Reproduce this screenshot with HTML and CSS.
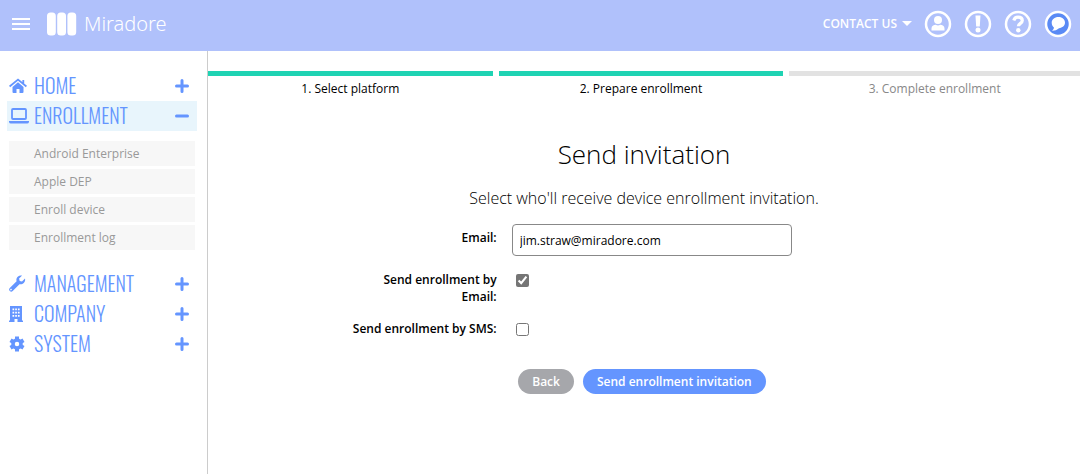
FILE: index.html
```html
<!DOCTYPE html>
<html lang="en">
<head>
    <meta charset="UTF-8">
    <meta name="viewport" content="width=device-width, initial-scale=1.0">
    <title>Miradore</title>
    <link rel="stylesheet" href="styles.css">
</head>
<body>

    <!-- Top bar -->
    <header class="topbar">
        <button class="menu-toggle" type="button" aria-label="Menu">
            <svg width="18" height="12" viewBox="0 0 18 12"><path d="M0 1h18M0 6h18M0 11h18" stroke="#fff" stroke-width="2"/></svg>
        </button>
        <a class="logo" href="#">
            <svg width="30" height="24" viewBox="0 0 30 24" fill="#fff">
                <rect x="0" y="0.500" width="8.800" height="23" rx="3.500"/>
                <rect x="10.200" y="0.500" width="8.800" height="23" rx="3.500"/>
                <rect x="20.400" y="0.500" width="8.800" height="23" rx="3.500"/>
            </svg>
            <span class="logo-text">Miradore</span>
        </a>
        <nav class="tools">
            <a class="contact" href="#">CONTACT US <span class="caret"></span></a>
            <a class="tool" href="#" aria-label="Account">
                <svg width="28" height="28" viewBox="0 0 28 28"><circle cx="14" cy="14" r="12" fill="none" stroke="#fff" stroke-width="2.500"/><circle cx="14" cy="10" r="4" fill="#fff"/><path d="M7.500 20.500v-2c0-2.500 2-3.700 4.300-3.700 1.400.9 3 .9 4.400 0 2.300 0 4.300 1.200 4.300 3.700v2z" fill="#fff"/></svg>
            </a>
            <a class="tool" href="#" aria-label="Notices">
                <svg width="28" height="28" viewBox="0 0 28 28"><circle cx="14" cy="14" r="12" fill="none" stroke="#fff" stroke-width="2.500"/><path d="M11.500 5.500h5l-.7 11h-3.600z" fill="#fff"/><circle cx="14" cy="20" r="2.500" fill="#fff"/></svg>
            </a>
            <a class="tool" href="#" aria-label="Help">
                <svg width="28" height="28" viewBox="0 0 28 28"><circle cx="14" cy="14" r="12" fill="none" stroke="#fff" stroke-width="2.500"/><path d="M9.800 10.500c.6-2.200 2-3.300 4.200-3.300 2.600 0 4.300 1.300 4.300 3.300 0 2.900-3.900 2.800-3.900 5.800" fill="none" stroke="#fff" stroke-width="3.200"/><circle cx="14.300" cy="20.300" r="2.200" fill="#fff"/></svg>
            </a>
            <a class="tool" href="#" aria-label="Chat">
                <svg width="28" height="28" viewBox="0 0 28 28"><circle cx="14" cy="14" r="12" fill="#5a8af5" stroke="#fff" stroke-width="2.500"/><path d="M14.500 7c4 0 6.500 2.500 6.500 5.600 0 3.200-2.700 5.400-6 5.600-2 1.800-4.500 2.600-7 2.500 1.200-.7 1.900-1.900 1.900-3.200-1.300-1-2.200-2.700-2.200-4.700C7.700 9.500 10.500 7 14.500 7z" fill="#fff"/></svg>
            </a>
        </nav>
    </header>

    <div class="page">
        <!-- Side menu -->
        <nav class="sidebar">
            <a class="menu-item" href="#">
                <svg class="menu-icon" viewBox="0 0 20 18"><path d="M9 5.300l5.500 4.700V15a1 1 0 0 1-1 1h-3v-4H7.500v4h-3a1 1 0 0 1-1-1v-5z" fill="#6495ff"/><path d="M.6 9.500L9 2.600l8.400 6.900M14.300 3v4" fill="none" stroke="#6495ff" stroke-width="1.800"/></svg>
                <span class="menu-label">HOME</span>
                <svg class="menu-sign" viewBox="0 0 14 14"><path d="M1.500 7h11M7 1.500v11"/></svg>
            </a>
            <a class="menu-item active" href="#">
                <svg class="menu-icon" viewBox="0 0 20 18"><rect x="3" y="2" width="14" height="10" rx="1" fill="none" stroke="#6495ff" stroke-width="1.800"/><path d="M0 14h20v1a2 2 0 0 1-2 1.500H2A2 2 0 0 1 0 15z" fill="#6495ff"/></svg>
                <span class="menu-label">ENROLLMENT</span>
                <svg class="menu-sign" viewBox="0 0 14 14"><path d="M1.500 7h11"/></svg>
            </a>
            <div class="submenu">
                <a href="#">Android Enterprise</a>
                <a href="#">Apple DEP</a>
                <a href="#">Enroll device</a>
                <a href="#">Enrollment log</a>
            </div>
            <a class="menu-item" href="#">
                <svg class="menu-icon" viewBox="0 0 20 18"><path d="M16 3.500l-3 3-2.300-.6-.6-2.300 3-3C10.500-.1 8 1.400 7.500 3.800c-.2 1-.1 1.700.1 2.500L.8 13.100a2 2 0 0 0 2.900 2.900l6.800-6.800c3.200.8 6.400-2 5.500-5.700zM2.300 15.300a.8.800 0 1 1 0-1.500.8.800 0 0 1 0 1.500z" fill="#6495ff"/></svg>
                <span class="menu-label">MANAGEMENT</span>
                <svg class="menu-sign" viewBox="0 0 14 14"><path d="M1.500 7h11M7 1.500v11"/></svg>
            </a>
            <a class="menu-item" href="#">
                <svg class="menu-icon" viewBox="0 0 20 18"><path d="M1 1h12v14.500h1V17H8.500v-3h-3v3H0v-1.500h1z" fill="#6495ff"/><path d="M3.500 3.500h1.700v1.700H3.500zm2.700 0h1.700v1.700H6.200zm2.700 0h1.700v1.700H8.900zM3.500 6.800h1.700v1.700H3.500zm2.700 0h1.700v1.700H6.200zm2.700 0h1.700v1.700H8.900zM3.500 10.100h1.700v1.700H3.500zm2.700 0h1.700v1.700H6.200zm2.700 0h1.700v1.700H8.900z" fill="#fff"/></svg>
                <span class="menu-label">COMPANY</span>
                <svg class="menu-sign" viewBox="0 0 14 14"><path d="M1.500 7h11M7 1.500v11"/></svg>
            </a>
            <a class="menu-item" href="#">
                <svg class="menu-icon" viewBox="0 0 20 18"><circle cx="8" cy="9" r="4" fill="none" stroke="#6495ff" stroke-width="3.500"/><path d="M8 1.500v3M8 13.500v3M1.500 5.200l3 1.800M11.500 11l3 1.800M1.500 12.800l3-1.800M11.500 7l3-1.800" stroke="#6495ff" stroke-width="4"/></svg>
                <span class="menu-label">SYSTEM</span>
                <svg class="menu-sign" viewBox="0 0 14 14"><path d="M1.500 7h11M7 1.500v11"/></svg>
            </a>
        </nav>

        <!-- Enrollment wizard -->
        <main class="content">
            <ol class="steps">
                <li class="step done">1. Select platform</li>
                <li class="step done">2. Prepare enrollment</li>
                <li class="step">3. Complete enrollment</li>
            </ol>

            <h1>Send invitation</h1>
            <p class="intro">Select who'll receive device enrollment invitation.</p>

            <form class="form">
                <div class="row">
                    <label for="email">Email:</label>
                    <div class="field"><input type="text" id="email" value="jim.straw@miradore.com"></div>
                </div>
                <div class="row">
                    <label for="by-email">Send enrollment by Email:</label>
                    <div class="field"><input type="checkbox" id="by-email" checked></div>
                </div>
                <div class="row">
                    <label for="by-sms">Send enrollment by SMS:</label>
                    <div class="field"><input type="checkbox" id="by-sms"></div>
                </div>
                <div class="buttons">
                    <button class="btn btn-back" type="button">Back</button>
                    <button class="btn btn-send" type="button">Send enrollment invitation</button>
                </div>
            </form>
        </main>
    </div>

</body>
</html>
```
FILE: styles.css
```css
* {
    box-sizing: border-box;
}

body {
    margin: 0;
    min-height: 100vh;
    display: flex;
    flex-direction: column;
    background-color: #fff;
    color: #000;
    font-family: "Open Sans", sans-serif;
    font-size: 12px;
    line-height: 17px;
}

a {
    color: inherit;
    text-decoration: none;
}

svg {
    display: block;
}

/* Top bar */
.topbar {
    display: flex;
    align-items: center;
    height: 51px;
    padding: 0 8px 4px 12px;
    background-color: #b0c1fb;
    color: #fff;
}

.menu-toggle {
    padding: 0;
    border: none;
    background: none;
    cursor: pointer;
}

.logo {
    display: flex;
    align-items: center;
    gap: 7px;
    margin-left: 17px;
}

.logo-text {
    font-family: "Noto Sans", sans-serif;
    font-size: 20px;
    font-weight: 300;
    line-height: 24px;
}

.tools {
    display: flex;
    align-items: center;
    gap: 12px;
    margin-left: auto;
}

.contact {
    display: flex;
    align-items: center;
    gap: 5px;
    font-weight: 600;
}

.caret {
    border: 5px solid transparent;
    border-top-color: #fff;
    border-bottom: none;
}

/* Side menu */
.page {
    display: flex;
    flex: 1;
}

.sidebar {
    flex: none;
    width: 208px;
    padding: 20px 10px 20px 7px;
    border-right: 1px solid #ccc;
}

.menu-item {
    display: flex;
    align-items: center;
    height: 30px;
    padding: 0 8px 0 2px;
    color: #6495ff;
}

.menu-item.active {
    background-color: #e8f5fc;
}

.menu-icon {
    width: 20px;
    height: 18px;
}

.menu-label {
    flex: 1;
    margin-left: 5px;
    padding-bottom: 2px;
    font-family: "Oswald", "Open Sans Condensed", "Roboto Condensed", "Liberation Sans Narrow", "Liberation Sans", sans-serif;
    font-size: 20px;
    font-weight: 300;
    line-height: 28px;
}

.menu-sign {
    width: 14px;
    height: 14px;
    fill: none;
    stroke: #6495ff;
    stroke-width: 3;
    stroke-linecap: round;
}

.submenu {
    display: flex;
    flex-direction: column;
    gap: 3px;
    padding: 10px 2px 19px;
}

.submenu a {
    height: 25px;
    padding-left: 25px;
    background-color: #f7f7f7;
    color: #999;
    line-height: 25px;
}

/* Wizard steps */
.content {
    flex: 1;
    padding-top: 20px;
}

.steps {
    display: grid;
    grid-template-columns: repeat(3, 1fr);
    margin: 0;
    padding: 0;
    list-style: none;
    text-align: center;
}

.step {
    padding-top: 4px;
    border-top: 5px solid #e2e2e2;
    color: #888;
}

.step.done {
    margin-right: 6px;
    border-color: #1fd3b3;
    color: #000;
}

h1 {
    margin: 37px 0 0;
    font-size: 26px;
    font-weight: 300;
    line-height: 40px;
    text-align: center;
}

.intro {
    margin: 12px 0 14px;
    font-size: 16px;
    font-weight: 300;
    line-height: 24px;
    text-align: center;
}

/* Form */
.row {
    display: grid;
    grid-template-columns: 1fr 2fr;
    margin-bottom: 10px;
}

.row label {
    justify-self: end;
    width: 148px;
    padding: 5px 2px 0 0;
    font-weight: 600;
    text-align: right;
}

.field {
    padding-left: 13px;
}

.field input[type="text"] {
    width: 280px;
    height: 32px;
    padding: 0 7px;
    border: 1px solid #888;
    border-radius: 4px;
    font: inherit;
}

.field input[type="checkbox"] {
    display: block;
    margin: 8px 4px 0;
    accent-color: #757575;
}

.buttons {
    display: flex;
    justify-content: center;
    gap: 9px;
    padding: 22px 4px 20px 0;
}

.btn {
    height: 25px;
    padding: 0 14px;
    border: none;
    border-radius: 13px;
    color: #fff;
    font: inherit;
    font-weight: 600;
    cursor: pointer;
}

.btn-back {
    background-color: #a6a7ab;
}

.btn-send {
    background-color: #6495ff;
}
```
